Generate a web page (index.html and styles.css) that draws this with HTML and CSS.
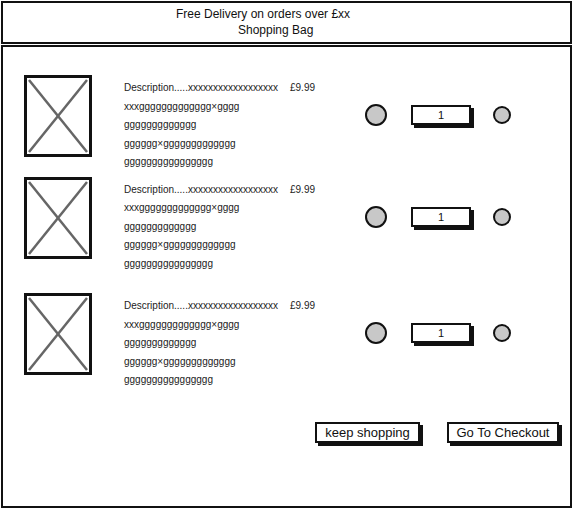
FILE: index.html
```html
<!DOCTYPE html>
<html lang="en">
<head>
<meta charset="UTF-8">
<title>Shopping Bag</title>
<link rel="stylesheet" href="styles.css">
</head>
<body>
	<div id="wrap">
		<div class="banner">
			<div class="line1">Free Delivery on orders over £xx</div>
			<div class="line2">Shopping Bag</div>
		</div>
		<div class="bag">
			<div class="item">
				<div class="thumb">
					<svg viewBox="0 0 62 76" width="62" height="76"><line x1="2" y1="2" x2="60" y2="74"/><line x1="60" y1="2" x2="2" y2="74"/></svg>
				</div>
				<div class="info">
					<div class="desc"><span class="name">Description.....xxxxxxxxxxxxxxxxxx</span><span class="price">£9.99</span></div>
					<div>xxxggggggggggggg×gggg</div>
					<div>ggggggggggggg</div>
					<div>gggggg×ggggggggggggg</div>
					<div>gggggggggggggggg</div>
				</div>
				<div class="qty">
					<span class="dot big"></span>
					<span class="count">1</span>
					<span class="dot small"></span>
				</div>
			</div>
			<div class="item">
				<div class="thumb">
					<svg viewBox="0 0 62 76" width="62" height="76"><line x1="2" y1="2" x2="60" y2="74"/><line x1="60" y1="2" x2="2" y2="74"/></svg>
				</div>
				<div class="info">
					<div class="desc"><span class="name">Description.....xxxxxxxxxxxxxxxxxx</span><span class="price">£9.99</span></div>
					<div>xxxggggggggggggg×gggg</div>
					<div>ggggggggggggg</div>
					<div>gggggg×ggggggggggggg</div>
					<div>gggggggggggggggg</div>
				</div>
				<div class="qty">
					<span class="dot big"></span>
					<span class="count">1</span>
					<span class="dot small"></span>
				</div>
			</div>
			<div class="item last">
				<div class="thumb">
					<svg viewBox="0 0 62 76" width="62" height="76"><line x1="2" y1="2" x2="60" y2="74"/><line x1="60" y1="2" x2="2" y2="74"/></svg>
				</div>
				<div class="info">
					<div class="desc"><span class="name">Description.....xxxxxxxxxxxxxxxxxx</span><span class="price">£9.99</span></div>
					<div>xxxggggggggggggg×gggg</div>
					<div>ggggggggggggg</div>
					<div>gggggg×ggggggggggggg</div>
					<div>gggggggggggggggg</div>
				</div>
				<div class="qty">
					<span class="dot big"></span>
					<span class="count">1</span>
					<span class="dot small"></span>
				</div>
			</div>
			<div class="actions">
				<span class="btn keep">keep shopping</span>
				<span class="btn checkout">Go To Checkout</span>
			</div>
		</div>
	</div>
</body>
</html>
```

FILE: styles.css
```css
body{
	margin:0;
	background:#fff;
	font-family:"Liberation Sans", Arial, sans-serif;
	color:#111;
}
#wrap{
	width:571px;
	margin:1px 0 0 1px;
}
.banner{
	box-sizing:border-box;
	height:43px;
	border:2px solid #111;
	padding-top:3px;
	font-size:12px;
	line-height:16px;
}
.line1{
	padding-left:173px;
}
.line2{
	padding-left:235px;
}
.bag{
	box-sizing:border-box;
	height:463px;
	margin-top:1px;
	border:2px solid #111;
	padding:28px 11px 0 21px;
}
.item{
	display:flex;
	align-items:flex-start;
	margin-bottom:5px;
}
.item:nth-child(2){
	margin-bottom:20px;
}
.thumb{
	box-sizing:border-box;
	width:68px;
	height:82px;
	border:3px solid #111;
}
.thumb svg{
	display:block;
}
.thumb line{
	stroke:#666;
	stroke-width:2.5;
}
.info{
	width:241px;
	margin:4px 0 0 32px;
	font-size:10px;
	line-height:18.5px;
	color:#222;
}
.desc{
	display:flex;
}
.name{
	width:166px;
}
.qty{
	display:flex;
	align-items:center;
	margin-top:29px;
}
.dot{
	box-sizing:border-box;
	border-radius:50%;
	background:#c8c8c8;
	border:2.5px solid #111;
}
.big{
	width:22px;
	height:22px;
}
.small{
	width:18px;
	height:18px;
}
.count{
	box-sizing:border-box;
	width:60px;
	height:20px;
	margin:0 22px 0 24px;
	border:2px solid #111;
	box-shadow:3px 3px 0 #111;
	text-align:center;
	font-size:11px;
	line-height:16px;
}
.actions{
	display:flex;
	justify-content:flex-end;
	gap:27px;
	margin-top:32px;
}
.btn{
	box-sizing:border-box;
	height:21px;
	border:2px solid #111;
	box-shadow:3px 3px 0 #111;
	text-align:center;
	font-size:13px;
	line-height:17px;
}
.keep{
	width:105px;
}
.checkout{
	width:112px;
}
```
